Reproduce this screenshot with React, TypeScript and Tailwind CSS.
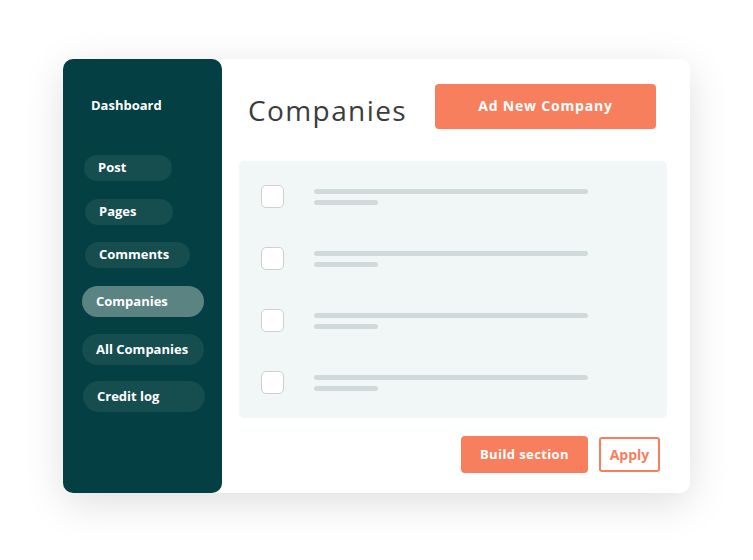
import React from "react";

const font = { fontFamily: '"Open Sans", "Noto Sans", sans-serif' };

function NavPill({ label, w, active, h }: { label: string; w: string; active?: boolean; h: string }) {
  return (
    <div
      className={`${w} ${h} rounded-full flex items-center pl-[14px] text-[13px] font-bold text-white tracking-[0px] ${
        active ? "bg-[#5b8382]" : "bg-[#164d4f]"
      }`}
    >
      {label}
    </div>
  );
}

function Row() {
  return (
    <div className="flex items-center h-[23px]">
      <div className="w-[23px] h-[23px] rounded-[5px] border border-[#cfcfcf] bg-white ml-[22px]" />
      <div className="ml-[30px] flex flex-col gap-[6px] pt-[1px]">
        <div className="w-[274px] h-[5px] rounded-full bg-[#d0dada]" />
        <div className="w-[64px] h-[5px] rounded-full bg-[#d0dada]" />
      </div>
    </div>
  );
}

export default function App() {
  return (
    <div className="w-[753px] h-[560px] bg-white pt-[59px] pl-[63px]" style={font}>
      <div className="flex w-[627px] h-[434px] rounded-[10px] bg-white shadow-[0_10px_40px_rgba(0,0,0,0.13)]">
        <div className="w-[159px] h-full bg-[#033f43] rounded-[10px] flex flex-col">
          <div className="pl-[28px] pt-[37px] text-[13px] font-bold text-white tracking-[0px] leading-[18px]">Dashboard</div>
          <div className="flex flex-col pt-[41px]">
            <div className="ml-[21px]"><NavPill label="Post" w="w-[88px]" h="h-[26px]" /></div>
            <div className="ml-[22px] mt-[18px]"><NavPill label="Pages" w="w-[88px]" h="h-[26px]" /></div>
            <div className="ml-[22px] mt-[17px]"><NavPill label="Comments" w="w-[105px]" h="h-[26px]" /></div>
            <div className="ml-[19px] mt-[18px]"><NavPill label="Companies" w="w-[122px]" h="h-[31px]" active /></div>
            <div className="ml-[19px] mt-[17px]"><NavPill label="All Companies" w="w-[122px]" h="h-[31px]" /></div>
            <div className="ml-[20px] mt-[16px]"><NavPill label="Credit log" w="w-[122px]" h="h-[31px]" /></div>
          </div>
        </div>
        <div className="flex-1 flex flex-col pl-[17px] pr-[23px]">
          <div className="flex items-center justify-between h-[45px] mt-[25px] pl-[9px] pr-[11px]">
            <div className="text-[28px] leading-[36px] text-[#3c3c3c] tracking-[1.4px] mt-[7px]">Companies</div>
            <div className="w-[221px] h-[45px] rounded-[4px] bg-[#f77f5e] text-white text-[14px] font-bold tracking-[0.8px] flex items-center justify-center pb-[3px]">
              Ad New Company
            </div>
          </div>
          <div className="mt-[32px] h-[257px] rounded-[5px] bg-[#f1f7f7] flex flex-col pt-[24px] gap-[39px]">
            <Row />
            <Row />
            <Row />
            <Row />
          </div>
          <div className="flex justify-end items-center gap-[11px] mt-[18px] pr-[7px]">
            <div className="w-[127px] h-[37px] rounded-[4px] bg-[#f77f5e] text-white text-[13px] font-bold tracking-[0.4px] flex items-center justify-center">
              Build section
            </div>
            <div className="w-[61px] h-[35px] rounded-[3px] border-2 border-[#f77f5e] bg-white text-[#f77f5e] text-[14px] font-bold flex items-center justify-center">
              Apply
            </div>
          </div>
        </div>
      </div>
    </div>
  );
}
